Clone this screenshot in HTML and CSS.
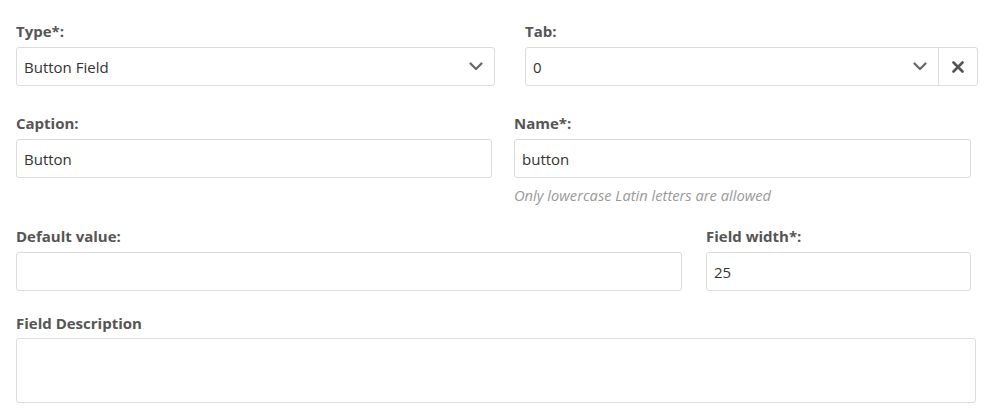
FILE: index.html
```html
<!DOCTYPE html>
<html>
<head>
<meta charset="utf-8">
<link rel="stylesheet" href="styles.css">
</head>
<body>
<div class="form">
  <div class="row row-1">
    <div class="group">
      <div class="label">Type*:</div>
      <div class="control select">
        <span class="value">Button Field</span>
        <span class="chev"><svg width="14" height="9" viewBox="0 0 14 9"><path d="M1.5 1.5 L7 7 L12.5 1.5" fill="none" stroke="#666" stroke-width="2.2" stroke-linecap="round" stroke-linejoin="round"/></svg></span>
      </div>
    </div>
    <div class="group">
      <div class="label">Tab:</div>
      <div class="control select">
        <span class="value">0</span>
        <span class="chev"><svg width="14" height="9" viewBox="0 0 14 9"><path d="M1.5 1.5 L7 7 L12.5 1.5" fill="none" stroke="#666" stroke-width="2.2" stroke-linecap="round" stroke-linejoin="round"/></svg></span>
        <span class="clear"><svg width="12" height="12" viewBox="0 0 12 12"><path d="M1.5 1.5 L10.5 10.5 M10.5 1.5 L1.5 10.5" fill="none" stroke="#555" stroke-width="2.6" stroke-linecap="round"/></svg></span>
      </div>
    </div>
  </div>
  <div class="row row-2">
    <div class="group">
      <div class="label">Caption:</div>
      <div class="control"><span class="value">Button</span></div>
    </div>
    <div class="group">
      <div class="label">Name*:</div>
      <div class="control"><span class="value">button</span></div>
      <div class="help">Only lowercase Latin letters are allowed</div>
    </div>
  </div>
  <div class="row row-3">
    <div class="group">
      <div class="label">Default value:</div>
      <div class="control"></div>
    </div>
    <div class="group">
      <div class="label">Field width*:</div>
      <div class="control"><span class="value">25</span></div>
    </div>
  </div>
  <div class="row row-4">
    <div class="group">
      <div class="label">Field Description</div>
      <div class="control textarea"></div>
    </div>
  </div>
</div>
</body>
</html>
```
FILE: styles.css
```css
* { box-sizing: border-box; }
html, body { margin: 0; padding: 0; background: #fff; }
body {
  font-family: "Open Sans", "Noto Sans", "Liberation Sans", sans-serif;
  font-size: 15px;
  color: #333;
}
.form { padding: 21px 0 0 16px; }
.row { display: grid; align-items: start; }
.row-1 { grid-template-columns: 479px 453px; column-gap: 30px; margin-bottom: 27px; }
.row-2 { grid-template-columns: 476px 457px; column-gap: 22px; margin-bottom: 21px; }
.row-3 { grid-template-columns: 666px 265px; column-gap: 24px; margin-bottom: 22px; }
.row-4 { grid-template-columns: 960px; }
.label {
  font-weight: 700;
  color: #555;
  line-height: 20px;
  height: 20px;
  margin-bottom: 6px;
}
.row-4 .label { margin-bottom: 5px; }
.control {
  height: 39px;
  border: 1px solid #dcdcdc;
  border-radius: 3px;
  display: flex;
  align-items: center;
  padding-left: 7px;
  background: #fff;
}
.value { flex: 1; color: #333; }
.select { padding-right: 0; }
.chev {
  width: 36px;
  display: flex;
  justify-content: center;
  align-items: center;
  height: 100%;
}
.clear {
  width: 39px;
  height: 100%;
  border-left: 1px solid #dcdcdc;
  display: flex;
  justify-content: center;
  align-items: center;
}
.help {
  margin-top: 7px;
  line-height: 20px;
  font-style: italic;
  color: #999;
  font-size: 14.7px;
}
.textarea { height: 65px; }
```
